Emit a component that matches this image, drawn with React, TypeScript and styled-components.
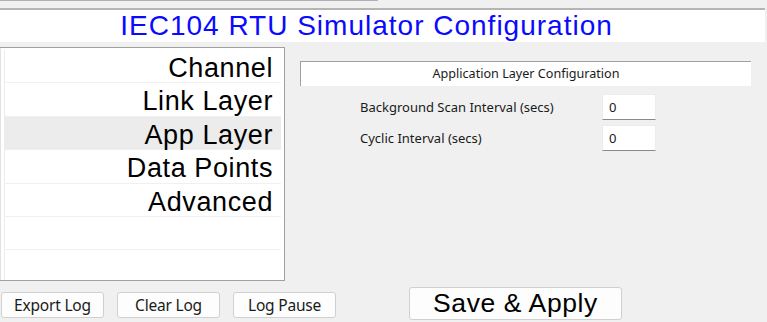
import styled, { createGlobalStyle } from "styled-components";

const GlobalStyle = createGlobalStyle`
  html, body {
    margin: 0;
    padding: 0;
    background: #f0f0f0;
  }
  body {
    font-family: "Liberation Sans", Arial, sans-serif;
  }
`;

const pages = ["Channel", "Link Layer", "App Layer", "Data Points", "Advanced", "", ""];

const fields = [
  { label: "Background Scan Interval (secs)", value: "0" },
  { label: "Cyclic Interval (secs)", value: "0" },
];

export default function App() {
  return (
    <>
      <GlobalStyle />
      <Window>
        <TopEdge />
        <TitleBar>IEC104 RTU Simulator Configuration</TitleBar>
        <Body>
          <LeftColumn>
            <PageList>
              {pages.map((page, i) => (
                <PageItem key={i} $selected={page === "App Layer"}>
                  {page}
                </PageItem>
              ))}
            </PageList>
            <LogButtons>
              <SmallButton>Export Log</SmallButton>
              <SmallButton>Clear Log</SmallButton>
              <SmallButton>Log Pause</SmallButton>
            </LogButtons>
          </LeftColumn>
          <RightColumn>
            <SectionHeader>Application Layer Configuration</SectionHeader>
            <Fields>
              {fields.map((field) => (
                <FieldRow key={field.label}>
                  <FieldLabel>{field.label}</FieldLabel>
                  <FieldInput defaultValue={field.value} />
                </FieldRow>
              ))}
            </Fields>
            <SaveButton>Save &amp; Apply</SaveButton>
          </RightColumn>
        </Body>
      </Window>
    </>
  );
}

const Window = styled.div`
  width: 767px;
  height: 322px;
  display: flex;
  flex-direction: column;
  overflow: hidden;
`;

const TopEdge = styled.div`
  width: 378px;
  height: 1px;
  background: #b0b0b0;
  margin-bottom: 7px;
`;

const TitleBar = styled.div`
  width: 765px;
  height: 34px;
  box-sizing: border-box;
  border-top: 2px solid #b4b4b4;
  background: #ffffff;
  color: #0a0aff;
  font-size: 28px;
  letter-spacing: 1px;
  line-height: 31px;
  text-align: center;
  padding-right: 32px;
`;

const Body = styled.div`
  display: grid;
  grid-template-columns: 285px 1fr;
  column-gap: 15px;
  margin-top: 5px;
`;

const LeftColumn = styled.div`
  display: flex;
  flex-direction: column;
`;

const PageList = styled.div`
  height: 234px;
  box-sizing: border-box;
  border: 1px solid #a0a0a0;
  border-left: none;
  background: #ffffff;
  padding: 2px 3px 0 4px;
  display: flex;
  flex-direction: column;
  overflow: hidden;
  box-shadow: inset 1px 0 0 #e2e2e2;
`;

const PageItem = styled.div<{ $selected?: boolean }>`
  height: 33.4px;
  flex: none;
  box-sizing: border-box;
  border-bottom: 1px solid #f0f0f0;
  border-left: 1px solid #ececec;
  background: ${(p) => (p.$selected ? "#ececec" : "#ffffff")};
  color: #000000;
  font-size: 27px;
  letter-spacing: 0.6px;
  line-height: 33px;
  padding-top: 2px;
  text-align: right;
  padding-right: 8px;
`;

const LogButtons = styled.div`
  display: flex;
  gap: 13px;
  margin-top: 11px;
  padding-left: 1px;
`;

const SmallButton = styled.button`
  flex: none;
  width: 103px;
  height: 26px;
  box-sizing: border-box;
  border: 1px solid #d0d0d0;
  border-radius: 3px;
  background: #fdfdfd;
  color: #1a1a1a;
  font-family: "Noto Sans", "Liberation Sans", sans-serif;
  font-size: 15.5px;
  letter-spacing: -0.2px;
  padding: 0;
  line-height: 24px;
`;

const RightColumn = styled.div`
  display: flex;
  flex-direction: column;
  padding-top: 14px;
`;

const SectionHeader = styled.div`
  width: 451px;
  height: 25px;
  box-sizing: border-box;
  background: #ffffff;
  border-top: 1px solid #a0a0a0;
  border-left: 1px solid #a0a0a0;
  font-family: "Noto Sans", "Liberation Sans", sans-serif;
  font-size: 12.6px;
  line-height: 23px;
  color: #1a1a1a;
  text-align: center;
`;

const Fields = styled.div`
  display: flex;
  flex-direction: column;
  gap: 5px;
  margin-top: 8px;
  padding-left: 60px;
`;

const FieldRow = styled.div`
  display: grid;
  grid-template-columns: 242px 54px;
  align-items: center;
`;

const FieldLabel = styled.span`
  font-family: "Noto Sans", "Liberation Sans", sans-serif;
  font-size: 13px;
  color: #1a1a1a;
`;

const FieldInput = styled.input`
  width: 54px;
  height: 26px;
  box-sizing: border-box;
  border: 1px solid #ececec;
  border-bottom: 1px solid #8a8a8a;
  background: #ffffff;
  font-family: "Noto Sans", "Liberation Sans", sans-serif;
  font-size: 13px;
  color: #1a1a1a;
  padding: 0 0 0 6px;
  outline: none;
`;

const SaveButton = styled.button`
  width: 213px;
  height: 33px;
  box-sizing: border-box;
  margin-top: auto;
  margin-left: 109px;
  margin-bottom: -2px;
  border: 1px solid #d0d0d0;
  border-radius: 3px;
  background: #fdfdfd;
  color: #000000;
  font-family: "Liberation Sans", Arial, sans-serif;
  font-size: 26.5px;
  letter-spacing: 0.6px;
  line-height: 31px;
  padding: 0;
`;
